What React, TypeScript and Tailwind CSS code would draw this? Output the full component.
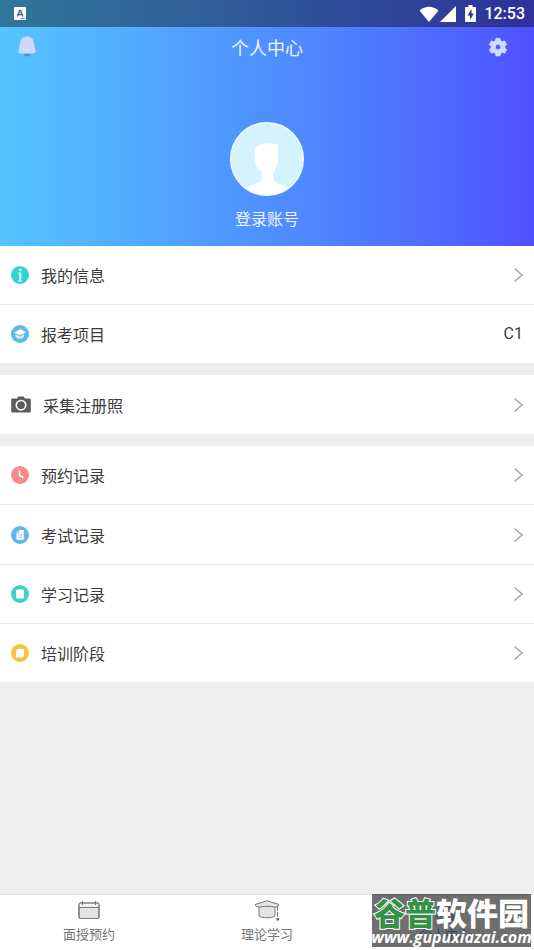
import React from "react";

type IconProps = { className?: string };

function Chevron() {
  return (
    <svg width="10" height="16" viewBox="0 0 10 16" fill="none" stroke="#a8a8a8" strokeWidth="1.5" aria-hidden="true">
      <path d="M1.500 1.500 9 8l-7.500 6.500" />
    </svg>
  );
}

function Disc({ color, children }: { color: string; children: React.ReactNode }) {
  return (
    <svg width="18" height="18" viewBox="0 0 18 18" aria-hidden="true">
      <circle cx="9" cy="9" r="9" fill={color} />
      {children}
    </svg>
  );
}

const InfoIcon = () => (
  <Disc color="#35d3cf">
    <circle cx="9.200" cy="3.900" r="1.400" fill="#d5fffb" />
    <path d="M7.200 6.500h3v8h1v1H7.200v-1h.8v-7h-.8z" fill="#d5fffb" />
  </Disc>
);

const CapIcon = () => (
  <Disc color="#5fb9e9">
    <path d="m9.500 4 5.500 3.200-6 3.100-6-2.600z" fill="#fff" />
    <path d="M4.500 9.300v2.400c2.200 2.600 6.500 2.600 8.500 0V9.300l-4 2.100z" fill="#d9f0fd" />
  </Disc>
);

const CameraIcon = () => (
  <svg width="20" height="17" viewBox="0 0 20 17" aria-hidden="true">
    <path d="M1.500 2.500H6L7.500.5h5L14 2.500h4.500q1.300 0 1.300 1.300v11.400q0 1.300-1.300 1.300h-17q-1.300 0-1.300-1.300V3.800q0-1.300 1.300-1.300z" fill="#5c5c5c" />
    <circle cx="10" cy="9.200" r="4.700" fill="none" stroke="#fff" strokeWidth="1.700" />
  </svg>
);

const ClockIcon = () => (
  <Disc color="#f68b8d">
    <path d="M8.600 4.200v5.300l4 2.300" fill="none" stroke="#fff" strokeWidth="1.500" />
  </Disc>
);

const PaperIcon = () => (
  <Disc color="#62b8ea">
    <path d="M8 4h4.800v9.800H5.500V6.700z" fill="#fff" />
    <path d="M8 4.500V7H5.700M7.300 9H11M7.300 11.200H11" fill="none" stroke="#62b8ea" strokeWidth=".8" />
  </Disc>
);

const BookIcon = () => (
  <Disc color="#3bd3ca">
    <rect x="5.200" y="4.500" width="7.800" height="9" rx="1" fill="#fff" />
  </Disc>
);

const StageIcon = () => (
  <Disc color="#f8c33f">
    <path d="M6.500 5H13v7l-1.500 1.500H5v-7z" fill="#fff" />
  </Disc>
);

function Row({ icon, label, value, tall }: { icon: React.ReactNode; label: string; value?: string; tall?: boolean }) {
  return (
    <button type="button" className={`flex w-full items-center bg-white px-[11px] text-left text-[16px] leading-[22px] text-[#3c3c3c] ${tall ? "h-[59px]" : "h-[58px]"}`}>
      {icon}
      <span className="ml-3 grow">{label}</span>
      {value ? <span className="font-[Roboto,sans-serif]">{value}</span> : <Chevron />}
    </button>
  );
}

function CalendarIcon() {
  return (
    <svg width="22" height="20" viewBox="0 0 22 20" fill="none" stroke="#777" aria-hidden="true">
      <rect x="1" y="3" width="20" height="15.500" rx="1.500" fill="#e4e4e4" />
      <path d="M1.500 3.500h19V7h-19z" fill="#f5f5f5" stroke="none" />
      <path d="M1 7.500h20M4.500 1v4M17.500 1v4" />
      <rect x="1" y="3" width="20" height="15.500" rx="1.500" />
    </svg>
  );
}

function GraduateIcon() {
  return (
    <svg width="26" height="22" viewBox="0 0 26 22" fill="#e4e4e4" stroke="#777" aria-hidden="true">
      <path d="M5 6v10c2.500 2.300 13.500 2.300 16 0V6z" />
      <path d="M13 .800 24 4.200q2 .8 0 1.900L21 7.300c-3-1.300-13-1.300-16 0L2 6.100q-2-1.100 0-1.900z" />
      <path d="M23.500 6v11" fill="none" strokeDasharray="5 1" />
      <path d="M22.500 18H25v2.500h-2.500z" fill="#666" stroke="none" />
    </svg>
  );
}

function PersonIcon({ className }: IconProps) {
  return (
    <svg className={className} width="22" height="22" viewBox="0 0 22 22" fill="#b9dcff" stroke="#3489df" strokeWidth="1.500" aria-hidden="true">
      <circle cx="11" cy="6" r="4.500" />
      <path d="M3 20v-2q0-5 5-5h6q5 0 5 5v2z" />
    </svg>
  );
}

function Tab({ icon, label, active }: { icon: React.ReactNode; label: string; active?: boolean }) {
  return (
    <button type="button" className={`flex flex-1 flex-col items-center pt-[5px] text-[13px] leading-[20px] ${active ? "text-[#3489df]" : "text-[#757575]"}`}>
      <span className="flex h-[24px] items-start">{icon}</span>
      <span>{label}</span>
    </button>
  );
}

function StatusBar() {
  return (
    <div className="flex h-[27px] items-center bg-black/40 pr-[9px] pl-[14px] text-white">
      <svg width="12" height="13" viewBox="0 0 12 13" aria-hidden="true">
        <rect width="12" height="13" rx="1" fill="#fff" />
        <path d="m3.300 9.500 2.300-6h1l2.300 6M4.300 7.500h3.600" fill="none" stroke="#31658b" strokeWidth="1.300" />
        <path d="M6.500 11.500h4.500" stroke="#7898b0" />
      </svg>
      <svg className="ml-auto" width="20" height="16" viewBox="0 0 20 16" aria-hidden="true">
        <path d="M.5 4.500Q10-3 19.500 4.500L10 16z" fill="#fff" />
      </svg>
      <svg className="ml-[1px]" width="16" height="16" viewBox="0 0 16 16" aria-hidden="true">
        <path d="M16 0v16H0z" fill="#fff" />
      </svg>
      <svg className="ml-[9px]" width="11" height="17" viewBox="0 0 11 17" aria-hidden="true">
        <path d="M3.500 0h4v2H10q1 0 1 1v13q0 1-1 1H1q-1 0-1-1V3q0-1 1-1h2.500z" fill="#fff" />
        <path d="M6.500 4 2.500 10.500H5V15l3.800-6.500H6.500z" fill="#30358f" />
      </svg>
      <span className="ml-[8px] font-[Roboto,sans-serif] text-[16px] leading-[27px] font-medium">12:53</span>
    </div>
  );
}

export default function App() {
  return (
    <div className="flex min-h-screen flex-col bg-[#efefef] font-['Noto_Sans_CJK_SC',sans-serif]">
      <header className="flex h-[246px] flex-col bg-linear-to-r from-[#55c5ff] to-[#4f50ff] text-[#eef6ff]">
        <StatusBar />
        <div className="grid h-[40px] grid-cols-[1fr_auto_1fr] items-center px-[18px]">
          <button type="button" aria-label="消息" className="justify-self-start">
            <svg width="18" height="22" viewBox="0 0 18 22" aria-hidden="true">
              <path d="M6 17.500h6q0 3-3 3t-3-3z" fill="#5e81dd" />
              <path d="M9 .5C4 .5 2.200 4 1.800 8c-.2 3-.6 4.500-1.300 6.500Q-.4 17.500 3 17.500h12q3.400 0 2.500-3C16.800 12.500 16.400 11 16.200 8 15.800 4 14 .5 9 .5z" fill="#ccd9fc" />
            </svg>
          </button>
          <h1 className="text-[18px]">个人中心</h1>
          <button type="button" aria-label="设置" className="mr-2 justify-self-end">
            <svg width="20" height="20" viewBox="0 0 20 20" aria-hidden="true">
              <path fillRule="evenodd" d="M8 1.200h4l.7 2.500 1.500.9 2.500-.7 2 3.500-1.800 1.800v1.700l1.800 1.800-2 3.500-2.500-.7-1.500.9-.7 2.500H8l-.7-2.500-1.500-.9-2.500.7-2-3.500 1.800-1.800V9.200L1.300 7.400l2-3.500 2.500.7 1.500-.9zM10 7.300a2.700 2.700 0 1 0 0 5.400 2.700 2.700 0 0 0 0-5.400z" fill="#cdddff" stroke="#cdddff" strokeWidth=".7" strokeLinejoin="round" />
            </svg>
          </button>
        </div>
        <button type="button" className="mt-[55px] flex flex-col items-center self-center text-[16px] leading-[24px]">
          <svg width="74" height="74" viewBox="0 0 74 74" aria-hidden="true">
            <defs>
              <clipPath id="avatar">
                <circle cx="37" cy="37" r="36" />
              </clipPath>
            </defs>
            <circle cx="37" cy="37" r="36.300" fill="#d3f3fe" stroke="#f3fbff" strokeWidth="1.400" />
            <path clipPath="url(#avatar)" d="M25 39c-1.500-10 0-16 8-17 5-1 8 0 14 0l1 5v12q-1 8-5 12v4q0 5 6 7 8 2 12 6l-6 12H19l-6-12q4-4 12-6 7-2 7-7v-4q-5-4-7-12z" fill="#fff" />
          </svg>
          <span className="mt-[10px]">登录账号</span>
        </button>
      </header>

      <main className="flex grow flex-col gap-[12px]">
        <section className="flex flex-col gap-px bg-[#e8e8e8]">
          <Row icon={<InfoIcon />} label="我的信息" />
          <Row icon={<CapIcon />} label="报考项目" value="C1" />
        </section>
        <section>
          <Row icon={<CameraIcon />} label="采集注册照" tall />
        </section>
        <section className="flex flex-col gap-px bg-[#e8e8e8]">
          <Row icon={<ClockIcon />} label="预约记录" />
          <Row icon={<PaperIcon />} label="考试记录" tall />
          <Row icon={<BookIcon />} label="学习记录" />
          <Row icon={<StageIcon />} label="培训阶段" />
        </section>
      </main>

      <nav className="relative flex h-[56px] border-t border-[#e2e2e2] bg-white">
        <Tab icon={<CalendarIcon />} label="面授预约" />
        <Tab icon={<GraduateIcon />} label="理论学习" />
        <Tab icon={<PersonIcon />} label="个人中心" active />
        <div className="pointer-events-none absolute -top-px right-[3px] flex h-[53px] w-[159px] flex-col items-center bg-[#303030]/70 text-white">
          <span className="text-[31px] leading-[35px] font-black whitespace-nowrap">
            <span className="text-[#329246] [paint-order:stroke_fill] [-webkit-text-stroke:2px_white]">谷普</span>软件园
          </span>
          <span className="font-['Open_Sans',sans-serif] text-[16px] leading-[16px] font-bold whitespace-nowrap italic">www.gupuxiazai.com</span>
        </div>
      </nav>
    </div>
  );
}
